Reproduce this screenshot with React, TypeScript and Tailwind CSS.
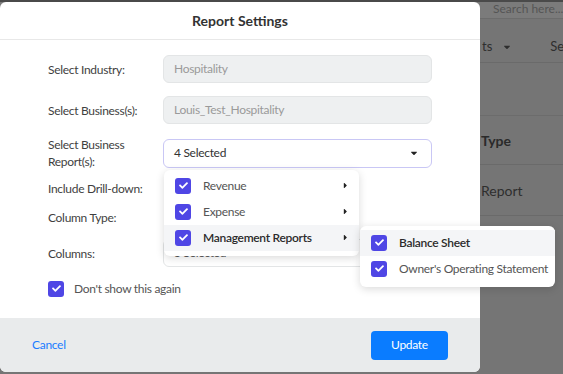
import { FaCheck } from "react-icons/fa";
import { FaCaretDown, FaCaretRight } from "react-icons/fa";

const Check = () => (
  <span className="w-4 h-4 rounded-[3px] bg-[#4f46e5] flex items-center justify-center shrink-0">
    <FaCheck className="w-[9px] h-[9px] text-white" />
  </span>
);

const MenuItem = ({ label, active, arrow }: { label: string; active?: boolean; arrow?: boolean }) => (
  <div className={`h-[26px] flex items-center pl-[11px] pr-[9px] gap-3 whitespace-nowrap ${active ? "bg-[#f4f5f7]" : ""}`}>
    <Check />
    <span className={`flex-1 text-[12px] tracking-[-0.3px] ${active ? "text-[#2b2b2b] font-semibold" : "text-[#555]"}`}>{label}</span>
    {arrow && <FaCaretRight className="w-[9px] h-[9px] text-[#222]" />}
  </div>
);

const Row = ({ label, children }: { label: React.ReactNode; children?: React.ReactNode }) => (
  <div className="flex items-center">
    <div className="w-[115px] text-[12px] tracking-[-0.3px] leading-[17px] text-[#3f3f3f]">{label}</div>
    <div className="flex-1">{children}</div>
  </div>
);

export default function App() {
  return (
    <div className="relative w-[563px] h-[374px] overflow-hidden bg-[#757575] font-['Lato',sans-serif]">
      {/* page behind the overlay */}
      <div className="absolute inset-0">
        <div className="h-[2px] bg-[#4a4a4a]" />
        <div className="h-[17px] bg-[#7b7b7b] border-b border-[#6c6c6c] pl-[493px] text-[12px] leading-[14px] text-[#555] whitespace-nowrap overflow-hidden">
          Search here...
        </div>
        <div className="h-[44px] border-b border-[#6a6a6a] flex items-center pl-[482px] pt-[12px] text-[13px] text-[#2e2e2e] whitespace-nowrap">
          <span className="flex items-center gap-[10px]">
            ts <FaCaretDown className="w-[10px] h-[10px]" />
          </span>
          <span className="ml-[38px]">Se</span>
        </div>
        <div className="h-[53px] border-b border-[#6c6c6c]" />
        <div className="h-[49px] border-b border-[#6a6a6a] flex items-center pl-[481px] text-[14px] font-bold text-[#2a2a2a]">
          Type
        </div>
        <div className="h-[51px] border-b border-[#6a6a6a] flex items-center pl-[481px] text-[14px] text-[#2e2e2e]">
          Report
        </div>
      </div>

      {/* modal */}
      <div className="absolute left-0 top-[2px] w-[480px] h-[370px] bg-white rounded-md flex flex-col">
        <div className="h-[38px] border-b border-[#e8e8e8] flex items-center justify-center text-[14px] font-bold text-[#333]">
          Report Settings
        </div>
        <div className="flex-1 pl-[48px] pr-[48px] pt-[15px] flex flex-col">
          <Row label="Select Industry:">
            <div className="h-[28px] rounded-md bg-[#eef0f1] border border-[#e3e5e6] flex items-center px-[10px] text-[12px] tracking-[-0.3px] text-[#9a9a9a]">
              Hospitality
            </div>
          </Row>
          <div className="h-[13px]" />
          <Row label="Select Business(s):">
            <div className="h-[28px] rounded-md bg-[#eef0f1] border border-[#e3e5e6] flex items-center px-[10px] text-[12px] tracking-[-0.3px] text-[#9a9a9a]">
              Louis_Test_Hospitality
            </div>
          </Row>
          <div className="h-[12px]" />
          <Row label={<>Select Business<br />Report(s):</>}>
            <div className="relative">
              <div className="h-[29px] rounded-md border border-[#c9c7f5] bg-white flex items-center pl-[10px] pr-[12px] text-[12px] tracking-[-0.3px] text-[#333]">
                <span className="flex-1">4 Selected</span>
                <FaCaretDown className="w-[10px] h-[10px] text-[#222]" />
              </div>
              <div className="absolute z-10 left-[1px] top-[31px] w-[195px] bg-white rounded-md shadow-[0_2px_8px_rgba(0,0,0,0.15)] pt-[3px] pb-[5px]">
                <MenuItem label="Revenue" arrow />
                <MenuItem label="Expense" arrow />
                <div className="relative">
                  <MenuItem label="Management Reports" active arrow />
                  <div className="absolute left-[196px] top-[1px] w-[195px] bg-white rounded-md shadow-[0_2px_8px_rgba(0,0,0,0.15)] pt-[4px] pb-[5px]">
                    <MenuItem label="Balance Sheet" active />
                    <MenuItem label="Owner's Operating Statement" />
                  </div>
                </div>
              </div>
            </div>
          </Row>
          <div className="h-[10px]" />
          <Row label="Include Drill-down:">
            <div className="h-[17px]" />
          </Row>
          <div className="h-[12px]" />
          <Row label="Column Type:">
            <div className="h-[17px]" />
          </Row>
          <div className="h-[13px]" />
          <Row label="Columns:">
            <div className="h-[28px] rounded-md border border-[#e3e5e6] bg-white flex items-center px-[10px] text-[12px] tracking-[-0.3px] text-[#555]">
              3 Selected
            </div>
          </Row>
          <div className="h-[13px]" />
          <div className="h-[17px] flex items-center gap-[10px]">
            <Check />
            <span className="text-[12px] tracking-[-0.3px] text-[#555]">Don't show this again</span>
          </div>
        </div>
        <div className="h-[54px] bg-[#e9ebec] rounded-b-md flex items-center pl-[32px] pr-[32px]">
          <span className="flex-1 text-[12px] tracking-[-0.3px] text-[#1a7cff]">Cancel</span>
          <button className="w-[77px] h-[29px] rounded-[4px] bg-[#0a7cff] text-white text-[12px] tracking-[-0.3px]">Update</button>
        </div>
      </div>
    </div>
  );
}
